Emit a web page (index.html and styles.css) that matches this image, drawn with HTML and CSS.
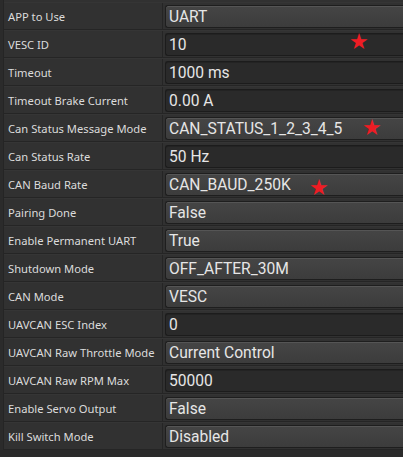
FILE: index.html
```html
<!DOCTYPE html>
<html>
<head>
<meta charset="utf-8">
<link rel="stylesheet" href="styles.css">
</head>
<body>
<div class="panel">
  <div class="row"><div class="label">APP to Use</div><div class="value combo">UART</div></div>
  <div class="row"><div class="label">VESC ID</div><div class="value spin">10</div><span class="star s1">★</span></div>
  <div class="row"><div class="label">Timeout</div><div class="value spin">1000 ms</div></div>
  <div class="row"><div class="label">Timeout Brake Current</div><div class="value spin">0.00 A</div></div>
  <div class="row"><div class="label">Can Status Message Mode</div><div class="value combo">CAN_STATUS_1_2_3_4_5</div><span class="star s2">★</span></div>
  <div class="row"><div class="label">Can Status Rate</div><div class="value spin">50 Hz</div></div>
  <div class="row"><div class="label">CAN Baud Rate</div><div class="value combo">CAN_BAUD_250K</div><span class="star s3">★</span></div>
  <div class="row"><div class="label">Pairing Done</div><div class="value combo">False</div></div>
  <div class="row"><div class="label">Enable Permanent UART</div><div class="value combo">True</div></div>
  <div class="row"><div class="label">Shutdown Mode</div><div class="value combo">OFF_AFTER_30M</div></div>
  <div class="row"><div class="label">CAN Mode</div><div class="value combo">VESC</div></div>
  <div class="row"><div class="label">UAVCAN ESC Index</div><div class="value spin">0</div></div>
  <div class="row"><div class="label">UAVCAN Raw Throttle Mode</div><div class="value combo">Current Control</div></div>
  <div class="row"><div class="label">UAVCAN Raw RPM Max</div><div class="value spin">50000</div></div>
  <div class="row"><div class="label">Enable Servo Output</div><div class="value combo">False</div></div>
  <div class="row"><div class="label">Kill Switch Mode</div><div class="value combo">Disabled</div></div>
</div>
</body>
</html>
```
FILE: styles.css
```css
html, body {
  margin: 0;
  padding: 0;
  background: #2b2b2b;
  width: 403px;
  height: 457px;
  overflow: hidden;
}
.panel {
  margin-left: 3px;
  padding-top: 2px;
  display: flex;
  flex-direction: column;
  background: #313131;
  border-left: 1px solid #252525;
}
.row {
  position: relative;
  display: grid;
  grid-template-columns: 159px 1fr;
  height: 28px;
  border-bottom: 1px solid #252525;
  box-sizing: border-box;
  border-top: 1px solid #353535;
}
.label {
  display: flex;
  align-items: center;
  padding-left: 4px;
  font-family: "Noto Sans", sans-serif;
  font-size: 11.2px;
  color: #dcdcdc;
  border-right: 1px solid #252525;
}
.value {
  margin: 2px 0 1px 2px;
  display: flex;
  align-items: center;
  padding-left: 3px;
  font-family: Roboto, sans-serif;
  font-size: 15.6px;
  color: #e6e6e6;
  border-radius: 3px 0 0 3px;
  border-right: none;
  box-sizing: border-box;
}
.combo {
  background: linear-gradient(#454545, #3c3c3c);
  border: 1px solid #1e1e1e;
  border-right: none;
  box-shadow: inset 0 1px 0 #555555;
}
.spin {
  background: #2a2a2a;
  border: 1px solid #1c1c1c;
  border-right: none;
  box-shadow: inset 0 1px 0 #232323;
}
.star {
  position: absolute;
  color: #ee1c24;
  font-size: 22px;
  line-height: 1;
  font-family: "DejaVu Sans", sans-serif;
}
.s1 { left: 345px; top: 0px; }
.s2 { left: 358px; top: 2px; }
.s3 { left: 305px; top: 6px; }
```
